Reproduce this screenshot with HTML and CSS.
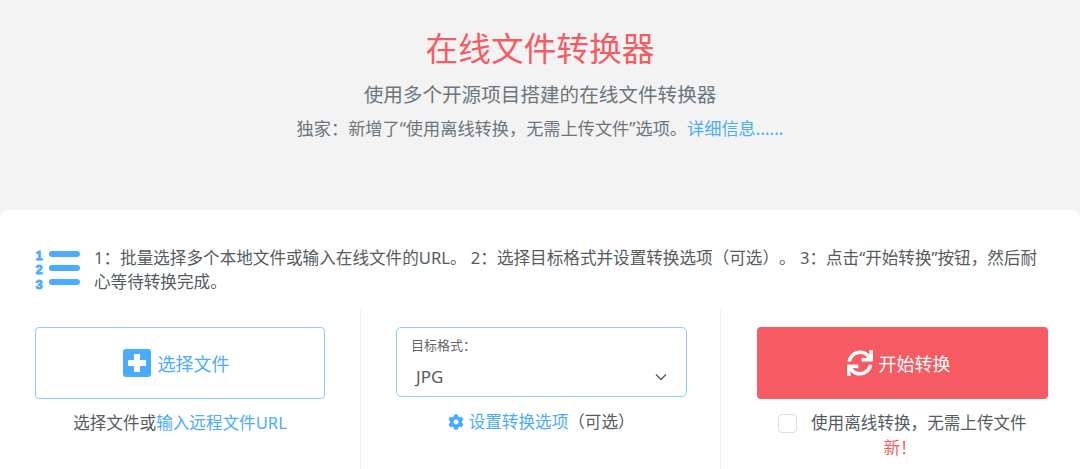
FILE: index.html
```html
<!DOCTYPE html>
<html lang="zh-CN">
<head>
    <meta charset="UTF-8">
    <meta name="viewport" content="width=device-width, initial-scale=1.0">
    <title>在线文件转换器</title>
    <link rel="stylesheet" href="styles.css">
</head>
<body>

    <!-- Header -->
    <header class="hero">
        <h1>在线文件转换器</h1>
        <p class="subtitle">使用多个开源项目搭建的在线文件转换器</p>
        <p class="notice">独家：新增了“使用离线转换，无需上传文件”选项。<a href="#">详细信息......</a></p>
    </header>

    <main class="card">
        <!-- Steps -->
        <div class="steps">
            <svg class="steps-icon" viewBox="0 0 46 44" width="46" height="44">
                <text class="steps-num" x="0.5" y="11.5">1</text>
                <text class="steps-num" x="0.5" y="26">2</text>
                <text class="steps-num" x="0.5" y="40.5">3</text>
                <rect x="14" y="3" width="31" height="6" rx="3"/>
                <rect x="14" y="17" width="31" height="6" rx="3"/>
                <rect x="14" y="31" width="31" height="6" rx="3"/>
            </svg>
            <p>1：批量选择多个本地文件或输入在线文件的URL。 2：选择目标格式并设置转换选项（可选）。 3：点击“开始转换”按钮，然后耐心等待转换完成。</p>
        </div>

        <div class="columns">
            <!-- Choose file -->
            <section class="col">
                <button class="file-btn">
                    <span class="plus-box">
                        <svg viewBox="0 0 28 28" width="28" height="28">
                            <path d="M11 5h6v6h6v6h-6v6h-6v-6H5v-6h6z"/>
                        </svg>
                    </span>
                    选择文件
                </button>
                <p class="col-note">选择文件或<a href="#">输入远程文件URL</a></p>
            </section>

            <!-- Target format -->
            <section class="col">
                <div class="format-box">
                    <span class="format-label">目标格式：</span>
                    <div class="format-value">
                        <span>JPG</span>
                        <svg viewBox="0 0 12 8" width="12" height="8">
                            <path d="M1 1.5l5 5 5-5"/>
                        </svg>
                    </div>
                </div>
                <p class="col-note options-note">
                    <a href="#">
                        <svg class="gear" viewBox="0 0 512 512" width="16" height="16">
                            <path d="M487.4 315.7l-42.6-24.6c4.3-23.2 4.3-47 0-70.2l42.6-24.6c4.9-2.8 7.1-8.6 5.5-14-11.1-35.6-30-67.8-54.7-94.6-3.8-4.1-10-5.1-14.8-2.3L380.8 110c-17.9-15.4-38.5-27.3-60.8-35.1V25.8c0-5.6-3.9-10.5-9.4-11.7-36.7-8.2-74.3-7.8-109.2 0-5.5 1.2-9.4 6.1-9.4 11.7V75c-22.2 7.9-42.8 19.8-60.8 35.1L88.7 85.5c-4.9-2.8-11-1.9-14.8 2.3-24.7 26.7-43.6 58.9-54.7 94.6-1.7 5.4.6 11.2 5.5 14L67.3 221c-4.3 23.2-4.3 47 0 70.2l-42.6 24.6c-4.9 2.8-7.1 8.6-5.5 14 11.1 35.6 30 67.8 54.7 94.6 3.8 4.1 10 5.1 14.8 2.3l42.6-24.6c17.9 15.4 38.5 27.3 60.8 35.1v49.2c0 5.6 3.9 10.5 9.4 11.7 36.7 8.2 74.3 7.8 109.2 0 5.5-1.2 9.4-6.1 9.4-11.7v-49.2c22.2-7.9 42.8-19.8 60.8-35.1l42.6 24.6c4.9 2.8 11 1.9 14.8-2.3 24.7-26.7 43.6-58.9 54.7-94.6 1.5-5.5-.7-11.3-5.6-14.1zM256 336c-44.1 0-80-35.9-80-80s35.9-80 80-80 80 35.9 80 80-35.9 80-80 80z"/>
                        </svg>
                        设置转换选项</a>（可选）
                </p>
            </section>

            <!-- Start -->
            <section class="col">
                <button class="start-btn">
                    <svg viewBox="0 0 512 512" width="26" height="26">
                        <path d="M440.65 12.57l4 82.77A247.16 247.16 0 0 0 255.83 8C134.73 8 33.91 94.92 12.29 209.82A12 12 0 0 0 24.09 224h49.05a12 12 0 0 0 11.67-9.26 175.91 175.91 0 0 1 317-56.94l-101.46-4.86a12 12 0 0 0-12.57 12v47.41a12 12 0 0 0 12 12H500a12 12 0 0 0 12-12V12a12 12 0 0 0-12-12h-47.37a12 12 0 0 0-11.98 12.57zM255.83 432a175.61 175.61 0 0 1-146-77.8l101.8 4.87a12 12 0 0 0 12.57-12v-47.4a12 12 0 0 0-12-12H12a12 12 0 0 0-12 12V500a12 12 0 0 0 12 12h47.35a12 12 0 0 0 12-12.6l-4.15-82.57A247.17 247.17 0 0 0 255.83 504c121.11 0 221.93-86.92 243.55-201.82a12 12 0 0 0-11.8-14.18h-49.05a12 12 0 0 0-11.67 9.26A175.86 175.86 0 0 1 255.83 432z"/>
                    </svg>
                    开始转换
                </button>
                <div class="offline">
                    <span class="checkbox"></span>
                    <span class="offline-text">使用离线转换，无需上传文件</span>
                </div>
                <p class="new-tag">新！</p>
            </section>
        </div>
    </main>

</body>
</html>
```

FILE: styles.css
```css
* {
    box-sizing: border-box;
}

html,
body {
    height: 100%;
}

body {
    margin: 0;
    display: flex;
    flex-direction: column;
    overflow: hidden;
    background: #f3f3f3;
    font-family: "Noto Sans", "Noto Sans CJK SC", sans-serif;
    color: #555b61;
    text-spacing-trim: space-all;
}

a {
    color: #4aacff;
    text-decoration: none;
}

p {
    margin: 0;
}

.hero {
    height: 210px;
    flex-shrink: 0;
    padding-top: 26px;
    text-align: center;
}

.hero h1 {
    margin: 0;
    font-size: 32.7px;
    font-weight: 400;
    line-height: 46px;
    color: #f65b64;
}

.subtitle {
    margin-top: 9px;
    font-size: 19.6px;
    line-height: 28px;
    color: #6c757d;
}

.notice {
    margin-top: 9px;
    font-size: 17.2px;
    line-height: 22px;
    color: #6c757d;
}

.card {
    flex: 1;
    display: flex;
    flex-direction: column;
    background: #fff;
    border-radius: 8px 8px 0 0;
}

.steps {
    display: flex;
    align-items: flex-start;
    gap: 13px;
    height: 100px;
    padding: 36px 40px 0 35px;
}

.steps-icon {
    flex-shrink: 0;
    margin-top: 2px;
    fill: #4aacff;
}

.steps-num {
    font-family: "Liberation Sans", sans-serif;
    font-size: 13px;
    font-weight: 700;
    stroke: #4aacff;
    stroke-width: 0.8;
}

.steps p {
    font-size: 16.6px;
    line-height: 24px;
    color: #555b61;
}

.columns {
    flex: 1;
    display: grid;
    grid-template-columns: repeat(3, 1fr);
}

.col {
    padding: 17px 32px 0 36px;
    text-align: center;
    border-left: 1px solid #eeeeee;
}

.col:first-child {
    padding-left: 35px;
    padding-right: 35px;
    border-left: 0;
}

.col:nth-child(2) {
    padding-left: 35px;
    padding-right: 33px;
}

.col-note {
    margin-top: 12px;
    font-size: 16.6px;
    line-height: 24px;
    color: #555b61;
}

.options-note {
    margin-top: 13px;
}

.file-btn {
    display: flex;
    align-items: center;
    justify-content: center;
    gap: 7px;
    width: 100%;
    height: 72px;
    padding: 0 8px 0 0;
    background: #fff;
    border: 1px solid #8fcdfc;
    border-radius: 4px;
    font-family: inherit;
    font-size: 18px;
    color: #4aacff;
}

.plus-box {
    display: flex;
    width: 28px;
    height: 28px;
    background: #4aacff;
    border-radius: 3px;
    fill: #fff;
}

.format-box {
    height: 70px;
    padding: 8px 14px 0 14px;
    text-align: left;
    border: 1px solid #8fcdfc;
    border-radius: 5px;
}

.format-label {
    display: block;
    font-size: 13px;
    line-height: 18px;
    color: #5f656b;
}

.format-value {
    display: flex;
    align-items: center;
    justify-content: space-between;
    margin-top: 11px;
    padding: 0 5px 0 5px;
    font-size: 17px;
    line-height: 24px;
    color: #555b61;
}

.format-value svg {
    fill: none;
    stroke: #555b61;
    stroke-width: 1.4;
}

.gear {
    vertical-align: -2px;
    fill: #4aacff;
}

.start-btn {
    display: flex;
    align-items: center;
    justify-content: center;
    gap: 6px;
    width: 100%;
    height: 72px;
    padding: 0 8px 0 0;
    background: #f65b64;
    border: 0;
    border-radius: 4px;
    font-family: inherit;
    font-size: 18px;
    color: #fff;
    fill: #fff;
}

.offline {
    display: flex;
    align-items: center;
    margin-top: 12px;
    padding-left: 21px;
    height: 24px;
}

.checkbox {
    width: 19px;
    height: 19px;
    border: 1px solid #dddddd;
    border-radius: 4px;
}

.offline-text {
    margin-left: 14px;
    font-size: 16.6px;
    line-height: 24px;
    color: #555b61;
}

.new-tag {
    margin-top: 1px;
    padding-right: 5px;
    font-size: 16.6px;
    line-height: 24px;
    color: #f65b64;
}
```
